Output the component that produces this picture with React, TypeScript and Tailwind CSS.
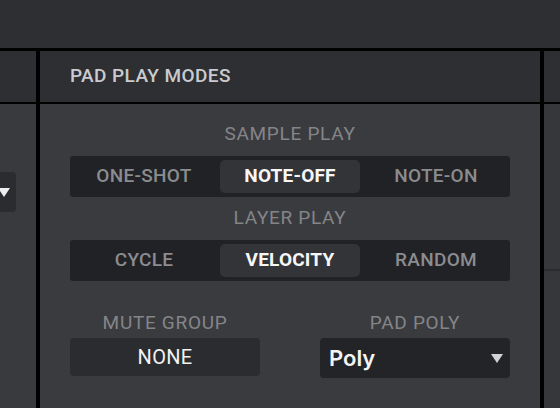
import { ReactNode } from 'react';

const font = { fontFamily: 'Roboto, "Liberation Sans", sans-serif' };

function Segmented({ options, active }: { options: string[]; active: number }) {
  return (
    <div className="grid grid-cols-3 gap-[6px] h-[41px] px-[4px] py-[4px] bg-[#212226] rounded-[3px]">
      {options.map((o, i) => (
        <div
          key={o}
          className={
            i === active
              ? 'flex items-center justify-center rounded-[5px] bg-[#333438] text-[19px] font-bold tracking-[0.2px] text-[#f7f7f7]'
              : 'flex items-center justify-center text-[19px] font-medium tracking-[0.3px] text-[#8b8c8f]'
          }
        >
          {o}
        </div>
      ))}
    </div>
  );
}

function Label({ children, className = '' }: { children: ReactNode; className?: string }) {
  return (
    <div className={`h-[20px] leading-[20px] text-center text-[19px] tracking-[0.7px] text-[#848588] ${className}`}>
      {children}
    </div>
  );
}

function Triangle({ className = '' }: { className?: string }) {
  return (
    <svg width="12" height="9" viewBox="0 0 12 9" className={className}>
      <path d="M0 0H12L6 9Z" fill="currentColor" />
    </svg>
  );
}

export default function App() {
  return (
    <div className="w-[560px] h-[408px] flex flex-col bg-[#2e2f33] overflow-hidden" style={font}>
      <div className="h-[48px] bg-[#2e2f33]" />
      <div className="h-[3px] bg-black" />
      <div className="flex-1 flex">
        {/* left column */}
        <div className="w-[36px] flex flex-col overflow-hidden">
          <div className="h-[51px] bg-[#2e2f33]" />
          <div className="h-[2px] bg-black" />
          <div className="flex-1 bg-[#393a3e] pt-[68px]">
            <div className="w-[16px] h-[40px] bg-[#2b2c30] rounded-r-[4px] flex items-center text-[#eeeeee]">
              <Triangle className="-ml-[2px] shrink-0" />
            </div>
          </div>
        </div>
        <div className="w-[4px] bg-black" />
        {/* center panel */}
        <div className="flex-1 flex flex-col">
          <div className="h-[51px] bg-[#2e2f33] flex items-center px-[30px]">
            <span className="text-[19px] font-medium text-[#c9cbce] tracking-[0.4px]">PAD PLAY MODES</span>
          </div>
          <div className="h-[2px] bg-black" />
          <div className="flex-1 bg-[#3a3b3f] px-[30px] pt-[20px]">
            <Label>SAMPLE PLAY</Label>
            <div className="mt-[12px]">
              <Segmented options={['ONE-SHOT', 'NOTE-OFF', 'NOTE-ON']} active={1} />
            </div>
            <Label className="mt-[11px]">LAYER PLAY</Label>
            <div className="mt-[12px]">
              <Segmented options={['CYCLE', 'VELOCITY', 'RANDOM']} active={1} />
            </div>
            <div className="mt-[32px] grid grid-cols-2 gap-[60px]">
              <div>
                <Label>MUTE GROUP</Label>
                <div className="mt-[5px] h-[38px] rounded-[4px] bg-[#2b2c30] flex items-center justify-center text-[20px] tracking-[0.3px] text-[#f2f2f2]">
                  NONE
                </div>
              </div>
              <div>
                <Label>PAD POLY</Label>
                <div className="mt-[5px] h-[40px] rounded-[4px] bg-[#232427] flex items-center justify-between pl-[9px] pr-[7px] text-[#d2d3d5]">
                  <span
                    className="text-[22px] font-semibold text-[#f4f4f4]"
                    style={{ fontFamily: 'Inter, "Liberation Sans", sans-serif' }}
                  >
                    Poly
                  </span>
                  <Triangle />
                </div>
              </div>
            </div>
          </div>
        </div>
        <div className="w-[4px] bg-black" />
        {/* right column */}
        <div className="w-[16px] flex flex-col">
          <div className="h-[51px] bg-[#2e2f33]" />
          <div className="h-[2px] bg-black" />
          <div className="h-[165px] bg-[#36373b]" />
          <div className="h-[2px] bg-[#2a2b2e]" />
          <div className="flex-1 bg-[#36373b]" />
        </div>
      </div>
    </div>
  );
}
